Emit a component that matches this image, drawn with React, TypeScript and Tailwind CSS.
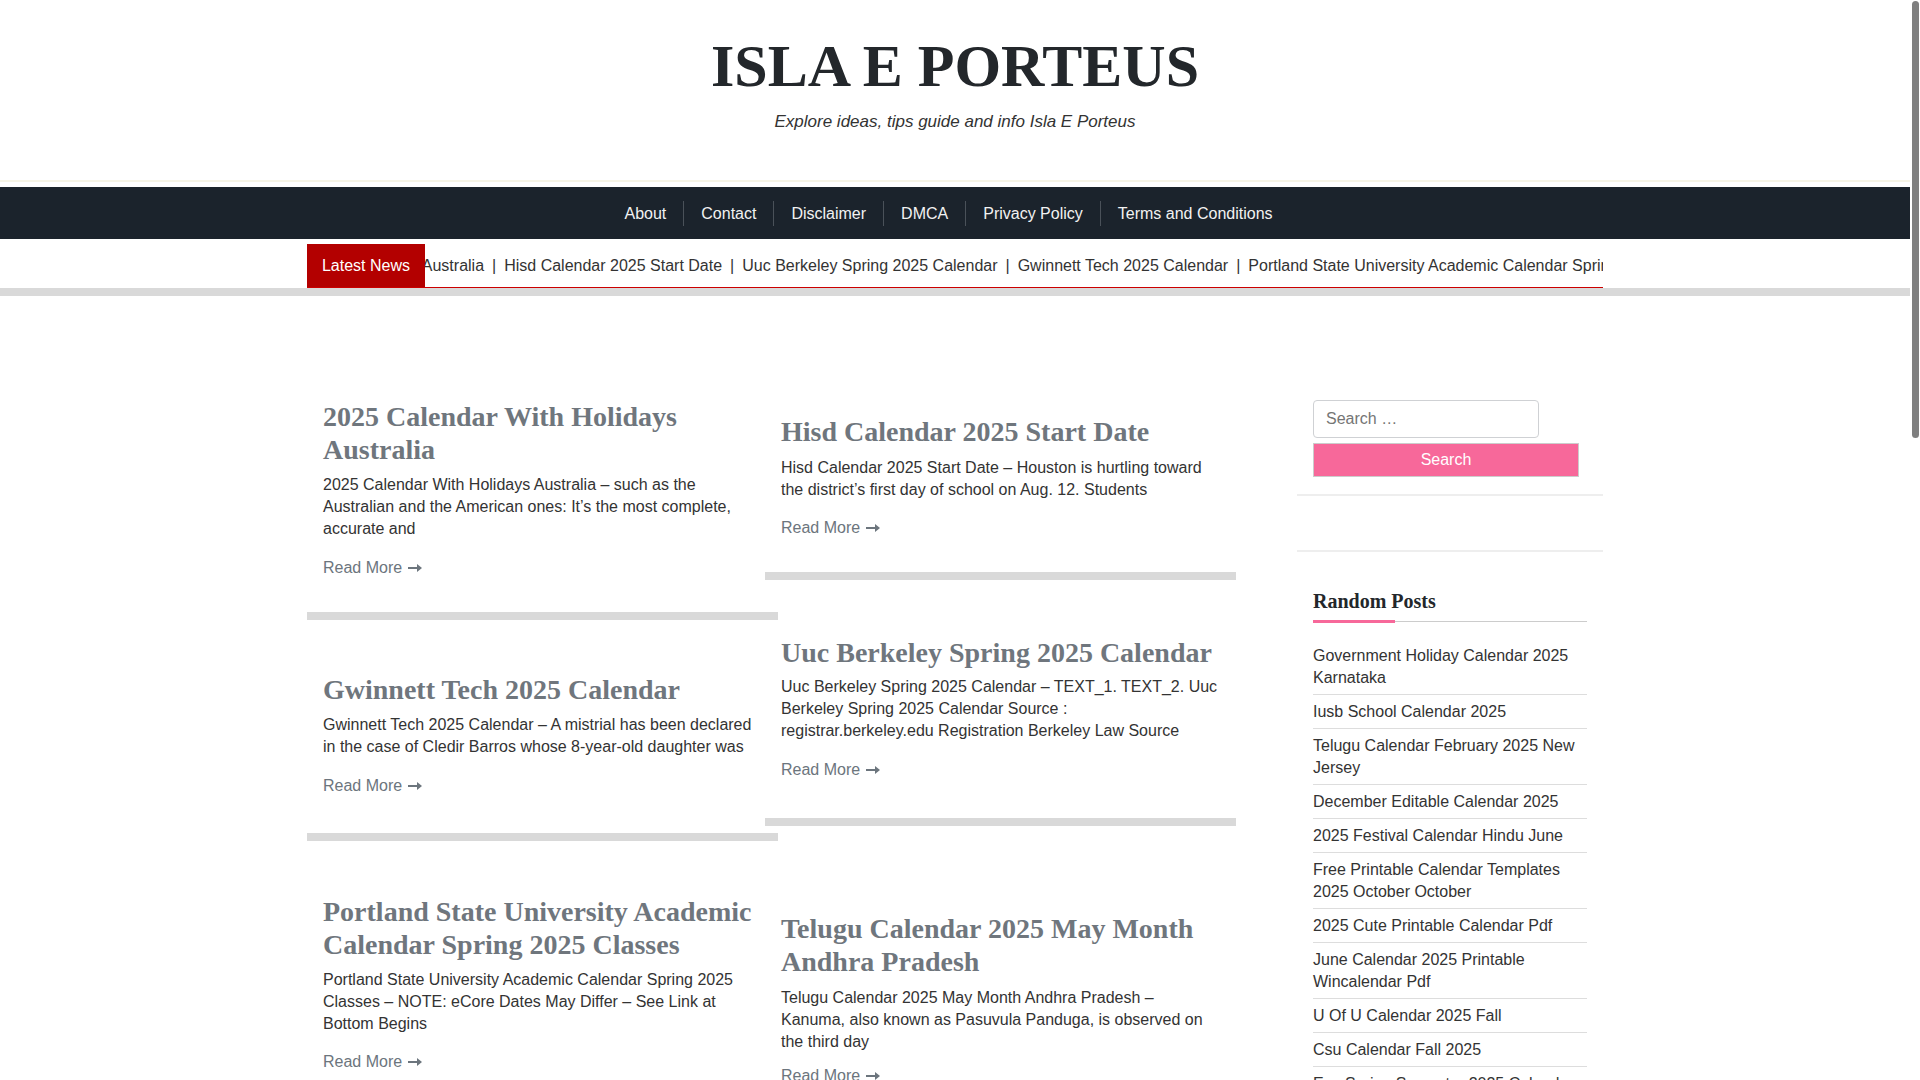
import React from "react";

type Post = {
  title: string;
  excerpt: string;
  pt: string;
  exMt: string;
  rmMt: string;
  pb: string;
};

const navLinks = ["About", "Contact", "Disclaimer", "DMCA", "Privacy Policy", "Terms and Conditions"];

const tickerItems = [
  "2025 Calendar With Holidays Australia",
  "Hisd Calendar 2025 Start Date",
  "Uuc Berkeley Spring 2025 Calendar",
  "Gwinnett Tech 2025 Calendar",
  "Portland State University Academic Calendar Spring 2025 Classes",
  "Telugu Calendar 2025 May Month Andhra Pradesh",
];

const leftPosts: Post[] = [
  {
    title: "2025 Calendar With Holidays Australia",
    excerpt:
      "2025 Calendar With Holidays Australia – such as the Australian and the American ones: It’s the most complete, accurate and",
    pt: "pt-[104px]",
    exMt: "mt-[8px]",
    rmMt: "mt-[17px]",
    pb: "pb-[33px]",
  },
  {
    title: "Gwinnett Tech 2025 Calendar",
    excerpt:
      "Gwinnett Tech 2025 Calendar – A mistrial has been declared in the case of Cledir Barros whose 8-year-old daughter was",
    pt: "pt-[53px]",
    exMt: "mt-[8px]",
    rmMt: "mt-[17px]",
    pb: "pb-[36px]",
  },
  {
    title: "Portland State University Academic Calendar Spring 2025 Classes",
    excerpt:
      "Portland State University Academic Calendar Spring 2025 Classes – NOTE: eCore Dates May Differ – See Link at Bottom Begins",
    pt: "pt-[54px]",
    exMt: "mt-[8px]",
    rmMt: "mt-[16px]",
    pb: "pb-[35px]",
  },
  {
    title: "Uc Davis Calendar 2025 Spring Quarter",
    excerpt:
      "Uc Davis Calendar 2025 Spring Quarter – The quarter begins with instruction on the first Monday and runs through finals week",
    pt: "pt-[54px]",
    exMt: "mt-[8px]",
    rmMt: "mt-[16px]",
    pb: "pb-[35px]",
  },
  {
    title: "Printable Calendar 2025 With Week Numbers",
    excerpt:
      "Printable Calendar 2025 With Week Numbers – Plan the whole year ahead with a clean layout that shows every week at a glance",
    pt: "pt-[54px]",
    exMt: "mt-[8px]",
    rmMt: "mt-[16px]",
    pb: "pb-[35px]",
  },
];

const rightPosts: Post[] = [
  {
    title: "Hisd Calendar 2025 Start Date",
    excerpt:
      "Hisd Calendar 2025 Start Date – Houston is hurtling toward the district’s first day of school on Aug. 12. Students",
    pt: "pt-[119px]",
    exMt: "mt-[9px]",
    rmMt: "mt-[16px]",
    pb: "pb-[33px]",
  },
  {
    title: "Uuc Berkeley Spring 2025 Calendar",
    excerpt:
      "Uuc Berkeley Spring 2025 Calendar – TEXT_1. TEXT_2. Uuc Berkeley Spring 2025 Calendar Source : registrar.berkeley.edu Registration Berkeley Law Source",
    pt: "pt-[56px]",
    exMt: "mt-[7px]",
    rmMt: "mt-[17px]",
    pb: "pb-[37px]",
  },
  {
    title: "Telugu Calendar 2025 May Month Andhra Pradesh",
    excerpt:
      "Telugu Calendar 2025 May Month Andhra Pradesh – Kanuma, also known as Pasuvula Panduga, is observed on the third day",
    pt: "pt-[86px]",
    exMt: "mt-[9px]",
    rmMt: "mt-[12px]",
    pb: "pb-[35px]",
  },
  {
    title: "School Calendar 2025 Template Word",
    excerpt:
      "School Calendar 2025 Template Word – Teachers and parents can edit the dates, add holidays and print the whole term",
    pt: "pt-[54px]",
    exMt: "mt-[8px]",
    rmMt: "mt-[16px]",
    pb: "pb-[35px]",
  },
  {
    title: "Lunar Calendar 2025 Chinese New Year",
    excerpt:
      "Lunar Calendar 2025 Chinese New Year – The Year of the Snake starts on January 29 and families gather for the reunion dinner",
    pt: "pt-[54px]",
    exMt: "mt-[8px]",
    rmMt: "mt-[16px]",
    pb: "pb-[35px]",
  },
];

const randomPosts = [
  "Government Holiday Calendar 2025 Karnataka",
  "Iusb School Calendar 2025",
  "Telugu Calendar February 2025 New Jersey",
  "December Editable Calendar 2025",
  "2025 Festival Calendar Hindu June",
  "Free Printable Calendar Templates 2025 October October",
  "2025 Cute Printable Calendar Pdf",
  "June Calendar 2025 Printable Wincalendar Pdf",
  "U Of U Calendar 2025 Fall",
  "Csu Calendar Fall 2025",
  "Esu Spring Semester 2025 Calendar",
  "Ucf Calendar Spring 2025",
  "Kalnirnay Marathi Calendar 2025 March",
  "Mlb Schedule 2025 Calendar Printable",
];

const ArrowRight = () => (
  <svg width="14" height="8" viewBox="0 0 14 8" className="fill-current">
    <path d="M0 3h9V0l5 4-5 4V5H0z" />
  </svg>
);

const PostCard = ({ post }: { post: Post }) => (
  <article className={`px-4 ${post.pt} ${post.pb} border-b-8 border-[#d9d9d9]`}>
    <h2 className="font-['Liberation_Serif',serif] text-[28px] leading-[33px] font-bold text-[#6f767d]">
      {post.title}
    </h2>
    <p className={`${post.exMt} text-[16px] leading-[22px] text-[#333]`}>{post.excerpt}</p>
    <a href="#" className={`${post.rmMt} flex items-center gap-[6px] text-[16px] leading-[22px] text-[#6c757d]`}>
      Read More
      <ArrowRight />
    </a>
  </article>
);

const App = () => {
  return (
    <div className="min-h-screen bg-white pr-[10px] font-['Liberation_Sans',Arial,sans-serif] text-[#333]">
      {/* header */}
      <header className="pt-[30px] pb-[46px] text-center border-b-2 border-[#f6f4e6]">
        <h1 className="font-['Liberation_Serif',serif] text-[60px] leading-[72px] font-bold text-[#23272b]">
          ISLA E PORTEUS
        </h1>
        <p className="mt-[8px] text-[17px] leading-6 italic text-[#333]">
          Explore ideas, tips guide and info Isla E Porteus
        </p>
      </header>

      <nav className="mt-[5px] h-[52px] pr-[13px] bg-[#1b232c] flex items-center justify-center">
        {navLinks.map((link, i) => (
          <a
            key={link}
            href="#"
            className={`px-[17px] h-[25px] leading-[25px] text-[16px] text-[#f2f2f2] ${
              i < navLinks.length - 1 ? "border-r border-[#4a5159]" : ""
            }`}
          >
            {link}
          </a>
        ))}
      </nav>

      {/* latest news ticker */}
      <div className="w-[1296px] mx-auto mt-[5px] flex h-[44px] border-b border-[#cc0000]">
        <div className="w-[118px] shrink-0 bg-[#b30000] text-white text-[16px] flex items-center justify-center">
          Latest News
        </div>
        <div className="flex-1 overflow-hidden whitespace-nowrap flex items-center text-[16px] text-[#333]">
          <div className="ml-[-214px] flex">
            {tickerItems.map((t, i) => (
              <span key={t} className="flex">
                {i > 0 && <span className="mx-2">|</span>}
                {t}
              </span>
            ))}
          </div>
        </div>
      </div>
      <div className="h-[8px] bg-[#d9d9d9]" />

      {/* main */}
      <main className="w-[1296px] mx-auto flex pb-20">
        <div className="w-[929px] flex items-start">
          <div className="w-[471px] flex flex-col">
            {leftPosts.map((p) => (
              <PostCard key={p.title} post={p} />
            ))}
          </div>
          <div className="w-[471px] -ml-[13px] flex flex-col">
            {rightPosts.map((p) => (
              <PostCard key={p.title} post={p} />
            ))}
          </div>
        </div>

        <aside className="ml-auto w-[306px]">
          <div className="px-4 pt-[104px] pb-[17px] border-b-2 border-[#eeeeee]">
            <input
              type="search"
              placeholder="Search …"
              className="w-[226px] h-[38px] px-3 rounded border border-[#cfd1d4] text-[16px] placeholder:text-[#757575] outline-none"
            />
            <button className="mt-[5px] w-[266px] h-[34px] bg-[#f7689a] border border-[#cccccc] text-white text-[16px]">
              Search
            </button>
          </div>
          <div className="h-[56px] border-b-2 border-[#eeeeee]" />

          <div className="px-4 pt-[36px]">
            <h3 className="font-['Liberation_Serif',serif] text-[20px] leading-[26px] font-bold text-[#23272b]">
              Random Posts
            </h3>
            <div className="mt-[6px] flex items-center h-[3px]">
              <span className="w-[82px] h-[3px] bg-[#f7689a]" />
              <span className="flex-1 h-px bg-[#cccccc]" />
            </div>
            <ul className="mt-[16px]">
              {randomPosts.map((r) => (
                <li key={r} className="pt-[6px] pb-[5px] border-b border-[#dddddd] text-[16px] leading-[22px] text-[#333]">
                  <a href="#">{r}</a>
                </li>
              ))}
            </ul>
          </div>
        </aside>
      </main>

      <footer className="bg-[#1b232c] text-[#cccccc] text-[14px] text-center py-6">
        Copyright © 2025 Isla E Porteus
      </footer>

      {/* window scrollbar as seen in the screenshot */}
      <div className="fixed top-0 right-0 h-screen w-[10px] bg-white">
        <div className="mx-auto mt-[1px] w-[7px] h-[437px] rounded-full bg-[#7f7f7f]" />
      </div>
    </div>
  );
};

export default App;
